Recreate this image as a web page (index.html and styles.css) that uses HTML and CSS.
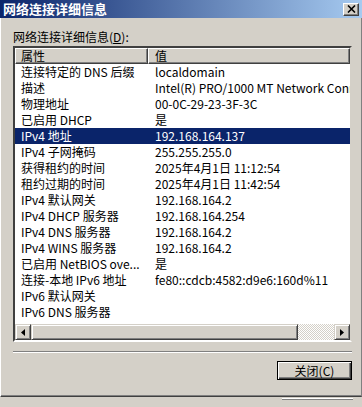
FILE: index.html
```html
<!DOCTYPE html>
<html>
    <head>
        <title>网络连接详细信息</title>
        <link rel="stylesheet" href="styles.css">
    </head>
    <body>
        <div class="titlebar">
            <span class="title">网络连接详细信息</span>
            <div class="close-button">
                <svg width="9" height="8" viewBox="0 0 9 8">
                    <path d="M1 0.5 L8 7.5 M8 0.5 L1 7.5" stroke="#000" stroke-width="1.6" fill="none"/>
                </svg>
            </div>
        </div>

        <div class="dialog">
            <div class="label">网络连接详细信息(<u>D</u>):</div>

            <div class="listbox">
                <div class="header">
                    <div class="header-cell prop">属性</div>
                    <div class="header-cell val">值</div>
                </div>

                <div class="rows">
                    <div class="row"><div class="prop">连接特定的 DNS 后缀</div><div class="val">localdomain</div></div>
                    <div class="row"><div class="prop">描述</div><div class="val">Intel(R) PRO/1000 MT Network Connection</div></div>
                    <div class="row"><div class="prop">物理地址</div><div class="val">00-0C-29-23-3F-3C</div></div>
                    <div class="row"><div class="prop">已启用 DHCP</div><div class="val">是</div></div>
                    <div class="row selected"><div class="prop">IPv4 地址</div><div class="val">192.168.164.137</div></div>
                    <div class="row"><div class="prop">IPv4 子网掩码</div><div class="val">255.255.255.0</div></div>
                    <div class="row"><div class="prop">获得租约的时间</div><div class="val">2025年4月1日 11:12:54</div></div>
                    <div class="row"><div class="prop">租约过期的时间</div><div class="val">2025年4月1日 11:42:54</div></div>
                    <div class="row"><div class="prop">IPv4 默认网关</div><div class="val">192.168.164.2</div></div>
                    <div class="row"><div class="prop">IPv4 DHCP 服务器</div><div class="val">192.168.164.254</div></div>
                    <div class="row"><div class="prop">IPv4 DNS 服务器</div><div class="val">192.168.164.2</div></div>
                    <div class="row"><div class="prop">IPv4 WINS 服务器</div><div class="val">192.168.164.2</div></div>
                    <div class="row"><div class="prop">已启用 NetBIOS ove...</div><div class="val">是</div></div>
                    <div class="row"><div class="prop">连接-本地 IPv6 地址</div><div class="val">fe80::cdcb:4582:d9e6:160d%11</div></div>
                    <div class="row"><div class="prop">IPv6 默认网关</div><div class="val"></div></div>
                    <div class="row"><div class="prop">IPv6 DNS 服务器</div><div class="val"></div></div>
                </div>

                <!-- horizontal scrollbar -->
                <div class="hscroll">
                    <div class="arrow">
                        <svg width="4" height="7" viewBox="0 0 4 7"><path d="M4 0 L0 3.5 L4 7 Z" fill="#000"/></svg>
                    </div>
                    <div class="thumb"></div>
                    <div class="track"></div>
                    <div class="arrow">
                        <svg width="4" height="7" viewBox="0 0 4 7"><path d="M0 0 L4 3.5 L0 7 Z" fill="#000"/></svg>
                    </div>
                </div>
            </div>

            <div class="separator"></div>

            <div class="actions">
                <button class="close-dialog">关闭(C)</button>
            </div>
        </div>

        <!-- edge of the window behind -->
        <div class="behind">
            <div class="behind-button"></div>
        </div>
    </body>
</html>
```

FILE: styles.css
```css
* {
    box-sizing: border-box;
}

body {
    margin: 0; /* Remove default margin */
    width: 362px;
    height: 407px;
    overflow: hidden;
    background: #d4d0c8; /* Classic window grey */
    font-family: "Noto Sans CJK SC", "Liberation Sans", sans-serif;
    font-size: 12px;
    color: #000;
}

/* Title bar */
.titlebar {
    height: 18px;
    display: flex;
    align-items: center;
    padding: 0 3px 0 3px;
    background: linear-gradient(to right, #0a246a, #a6caf0);
}

.title {
    color: #fff;
    font-weight: bold;
    font-size: 13px;
    line-height: 18px;
}

.close-button {
    margin-left: auto;
    width: 16px;
    height: 13px;
    display: flex;
    align-items: center;
    justify-content: center;
    background: #d4d0c8;
    border-top: 1px solid #fff;
    border-left: 1px solid #fff;
    border-right: 1px solid #404040;
    border-bottom: 1px solid #404040;
    box-shadow: inset -1px -1px #808080;
}

/* Dialog body */
.dialog {
    height: 379px;
    padding: 11px 9px 0 12px;
    border-left: 1px solid #fff;
    border-right: 1px solid #808080;
    border-bottom: 1px solid #404040;
    box-shadow: inset 0 -1px #808080;
}

.label {
    line-height: 16px;
}

.label u {
    text-decoration: underline;
}

.listbox {
    margin-top: 1px;
    height: 296px;
    background: #fff;
    border-top: 2px solid #404040;
    border-left: 2px solid #404040;
    border-right: 2px solid #d4d0c8;
    border-bottom: 2px solid #fff;
    display: flex;
    flex-direction: column;
    overflow: hidden;
}

.header {
    display: flex;
    height: 16px;
    flex-shrink: 0;
}

.header-cell {
    background: #d4d0c8;
    border-top: 1px solid #fff;
    border-left: 1px solid #fff;
    border-bottom: 1px solid #404040;
    border-right: 1px solid #404040;
    box-shadow: inset -1px -1px #808080;
    line-height: 13px;
    white-space: nowrap;
}

.header-cell.prop {
    width: 133px;
    padding-left: 5px;
}

.header-cell.val {
    flex: 1;
    padding-left: 6px;
}

.rows {
    height: 260px;
    flex-shrink: 0;
}

.row {
    display: flex;
    height: 16px;
    line-height: 16px;
    white-space: nowrap;
    overflow: hidden;
}

.row .prop {
    width: 133px;
    flex-shrink: 0;
    padding-left: 6px;
    overflow: hidden;
}

.row .val {
    flex: 1;
    padding-left: 7px;
    overflow: hidden;
}

.row.selected {
    background: #0a246a;
    color: #fff;
}

/* Horizontal scrollbar */
.hscroll {
    display: flex;
    height: 16px;
    flex-shrink: 0;
}

.arrow,
.thumb {
    background: #d4d0c8;
    border-top: 1px solid #d4d0c8;
    border-left: 1px solid #d4d0c8;
    border-right: 1px solid #404040;
    border-bottom: 1px solid #404040;
    box-shadow: inset 1px 1px #fff, inset -1px -1px #808080;
}

.arrow {
    width: 16px;
    display: flex;
    align-items: center;
    justify-content: center;
}

.thumb {
    width: 267px;
}

.track {
    flex: 1;
    background: repeating-conic-gradient(#fff 0 25%, #d4d0c8 0 50%) 0 0 / 2px 2px;
}

/* Etched separator */
.separator {
    margin-top: 9px;
    border-top: 1px solid #808080;
    border-bottom: 1px solid #fff;
}

.actions {
    display: flex;
    justify-content: flex-end;
    margin-top: 8px;
}

.close-dialog {
    width: 75px;
    height: 19px;
    padding: 0;
    background: #d4d0c8;
    border: 1px solid #000; /* Default button frame */
    box-shadow: inset 1px 1px #fff, inset -1px -1px #404040, inset -2px -2px #808080;
    font-family: "Noto Sans CJK SC", "Liberation Sans", sans-serif;
    font-size: 12px;
    line-height: 15px;
    color: #000;
}

/* The window underneath */
.behind {
    height: 10px;
    padding-top: 1px;
}

.behind-button {
    margin-left: 282px;
    width: 71px;
    height: 2px;
    border-top: 1px solid #fff;
    background: #808080;
}
```
